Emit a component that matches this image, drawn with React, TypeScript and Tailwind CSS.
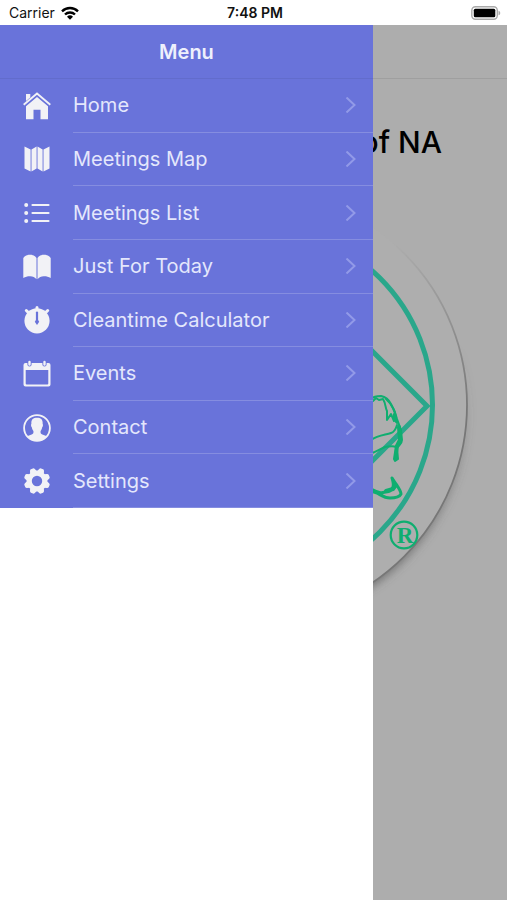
import type { ReactNode } from "react";

interface MenuItem {
    label: string;
    icon: ReactNode;
}

const HomeIcon = () => (
    <svg viewBox="0 0 28 28" className="size-7" fill="currentColor" aria-hidden="true">
        <path d="M14 5 25 14.3V27.3h-7.500v-9.500h-7v9.500H3V14.300z" />
        <path d="M.7 12.800 14 1.500l13.300 11.300" fill="none" stroke="currentColor" strokeWidth="1.900" />
        <path d="M3 2h4.300v3.500L3 9z" />
    </svg>
);

const MapIcon = () => (
    <svg viewBox="0 0 28 28" className="size-7" fill="currentColor" aria-hidden="true">
        <path d="M1.500 1.500 7.600 4.500V26.500L1.500 23.500zM8.500 4.500 13.600 1.500v22L8.500 26.500zM14.500 1.500l5.100 3v22l-5.100-3zM20.500 4.500 26.500 1.500v22L20.500 26.500z" />
    </svg>
);

const ListIcon = () => (
    <svg viewBox="0 0 28 28" className="size-7" fill="currentColor" aria-hidden="true">
        <circle cx="3.200" cy="6" r="2" />
        <circle cx="3.200" cy="14" r="2" />
        <circle cx="3.200" cy="22" r="2" />
        <path d="M9.500 6H25.500M9.500 14H25.500M9.500 22H25.500" stroke="currentColor" strokeWidth="2.200" strokeLinecap="round" />
    </svg>
);

const BookIcon = () => (
    <svg viewBox="0 0 28 28" className="size-7" fill="currentColor" aria-hidden="true">
        <path d="M13.500 5C12 2.600 9.800 1.800 7 1.800S1.800 2.600.3 5V25c2.400-1.500 4.600-1.900 7-1.800 2.500.1 4.600 1 6.200 3zM14.500 5C16 2.600 18.200 1.800 21 1.800s5.200.8 6.700 3.200V25c-2.400-1.500-4.600-1.900-7-1.800-2.500.1-4.600 1-6.200 3z" />
    </svg>
);

const StopwatchIcon = () => (
    <svg viewBox="0 0 28 28" className="size-7" aria-hidden="true">
        <circle cx="14" cy="14.800" r="12.600" fill="currentColor" />
        <path d="M14 1.500v3M3.300 4.500l1.500 1.500M24.700 4.500l-1.500 1.500" stroke="currentColor" strokeWidth="3" strokeLinecap="round" />
        <path d="M14 6.500v9" stroke="#6973da" strokeWidth="2.200" strokeLinecap="round" />
        <path d="M14 12.500l2.200 3.200L14 19l-2.200-3.300z" fill="#6973da" />
    </svg>
);

const CalendarIcon = () => (
    <svg viewBox="0 0 28 28" className="size-7" aria-hidden="true">
        <path fillRule="evenodd" fill="currentColor" d="M2.500 3h23a2 2 0 0 1 2 2v19.500a2 2 0 0 1-2 2h-23a2 2 0 0 1-2-2V5a2 2 0 0 1 2-2zM2.700 10v13.500q0 1 1 1h20.600q1 0 1-1V10z" />
        <path d="M6.500 1.500v3M21.500 1.500v3" stroke="#6973da" strokeWidth="4.200" strokeLinecap="round" />
        <path d="M6.500 2v2.500M21.500 2v2.500" stroke="currentColor" strokeWidth="2.400" strokeLinecap="round" />
    </svg>
);

const ContactIcon = () => (
    <svg viewBox="0 0 28 28" className="size-7" aria-hidden="true">
        <circle cx="14" cy="14" r="12.900" fill="none" stroke="currentColor" strokeWidth="1.800" />
        <path fill="currentColor" d="M14 3.800c4.300 0 6 2.300 5.600 6.200.7.300.3 2.900-.5 3.500-.3 1.700-.8 2.700-1.500 3.500-.2 2.400.1 3 1.700 3.600l4.700 1.700A13 13 0 0 1 4 22.300l4.700-1.700c1.600-.6 1.900-1.200 1.700-3.600-.7-.8-1.200-1.800-1.500-3.500-.8-.6-1.200-3.200-.5-3.500C8 6.100 9.700 3.800 14 3.800z" />
    </svg>
);

const GEAR_TEETH = [22.5, 67.5, 112.5, 157.5, 202.5, 247.5, 292.5, 337.5];

const SettingsIcon = () => (
    <svg viewBox="0 0 28 28" className="size-7" aria-hidden="true">
        <circle cx="14" cy="14" r="7.800" fill="none" stroke="currentColor" strokeWidth="5.200" />
        {GEAR_TEETH.map((angle) => (
            <path key={angle} d="M10.300 5 11.400 2q.5-1.200 1.500-1.200h2.200q1 0 1.500 1.200l1.100 3z" fill="currentColor" transform={`rotate(${angle} 14 14)`} />
        ))}
    </svg>
);

const menuItems: MenuItem[] = [
    { label: "Home", icon: <HomeIcon /> },
    { label: "Meetings Map", icon: <MapIcon /> },
    { label: "Meetings List", icon: <ListIcon /> },
    { label: "Just For Today", icon: <BookIcon /> },
    { label: "Cleantime Calculator", icon: <StopwatchIcon /> },
    { label: "Events", icon: <CalendarIcon /> },
    { label: "Contact", icon: <ContactIcon /> },
    { label: "Settings", icon: <SettingsIcon /> },
];

function StatusBar() {
    return (
        <div className="grid h-[25px] grid-cols-3 items-center bg-white pr-[6px] pl-[9px] text-sm text-[#111]">
            <div className="flex items-center gap-[6px]">
                <span>Carrier</span>
                <svg viewBox="0 0 18 14" className="h-[14px] w-[18px]" aria-hidden="true">
                    <path d="M1 5.300a11.500 11.500 0 0 1 16 0M4 8.500a7.200 7.200 0 0 1 10 0" fill="none" stroke="#000" strokeWidth="2.400" />
                    <path d="M9 13.700 6 10.700a4.300 4.300 0 0 1 6 0z" />
                </svg>
            </div>
            <span className="text-center font-semibold">7:48 PM</span>
            <svg viewBox="0 0 30 14" className="h-[14px] w-[30px] justify-self-end" aria-hidden="true">
                <rect x=".8" y=".8" width="25.500" height="12.400" rx="3.600" fill="#fff" stroke="#aaa" strokeWidth="1.400" />
                <rect x="2.800" y="2.700" width="21.500" height="8.600" rx="1.500" fill="#000" />
                <path d="M27.500 4.700c2.300.7 2.300 3.900 0 4.600z" fill="#aaa" />
            </svg>
        </div>
    );
}

function Emblem() {
    return (
        <svg viewBox="0 180 507 460" className="w-full" role="img" aria-label="NA emblem">
            <defs>
                <linearGradient id="rim" gradientUnits="userSpaceOnUse" x1="385" y1="245" x2="450" y2="420">
                    <stop offset="0" stopColor="#777" stopOpacity="0" />
                    <stop offset="1" stopColor="#777" />
                </linearGradient>
                <linearGradient id="shade" gradientUnits="userSpaceOnUse" x1="400" y1="340" x2="380" y2="590">
                    <stop offset="0" stopColor="#555" stopOpacity="0" />
                    <stop offset="1" stopColor="#555" stopOpacity=".65" />
                </linearGradient>
                <filter id="soft">
                    <feGaussianBlur stdDeviation="4" />
                </filter>
            </defs>
            <circle cx="255" cy="409" r="213" fill="url(#shade)" filter="url(#soft)" />
            <circle cx="253" cy="405" r="214" fill="#aeaeae" stroke="url(#rim)" strokeWidth="1.800" />
            <g fill="none" stroke="#2aa78b" strokeWidth="5">
                <circle cx="253" cy="405" r="179.500" />
                <path d="M253 231.500 427 406 253 580.500 79 406z" />
            </g>
            <g fill="none" stroke="#0fae70" strokeWidth="2" strokeLinecap="round" strokeLinejoin="round">
                <path d="M371 399c3-3 7-3 10-3 5 1 8 4 10 8 3 5 5 10 6 15l4 11 1 10c0 4-3 5-5 8l1 11-3 2 1-14c-4-2-8 0-11 0-5 2-9 5-13 6" />
                <path d="M373 401l3-3 3 2 4-1c3 5 2 8 4 12v9l4-6 3 7v-7l2 8M371 440c7-5 14-5 20-7 4-1 5-5 6-8M386 399c7 6 10 14 11 24" />
                <path d="M399 427l1 13-3 6-2 13" strokeWidth="4" />
                <path d="M371 489c4 2 6 3 10 4 5-2 10 0 12-6 1-3 0-6-1-9l4 6c2 3 5 7 5 10-2 4-7 4-11 4-6 0-9-3-13-5l-6-2" strokeWidth="3" />
                <path d="M386 491l7-2 3-4" strokeWidth="4" />
            </g>
            <circle cx="404" cy="535" r="13.300" fill="none" stroke="#0fae70" strokeWidth="2.200" />
            <text x="405" y="543" textAnchor="middle" fill="#0fae70" fontSize="23" fontWeight="700" fontFamily="Liberation Serif, serif">R</text>
        </svg>
    );
}

function Menu() {
    return (
        <aside className="absolute inset-y-0 left-0 w-[373px] max-w-full bg-white">
            <div className="bg-[#6973da] text-[#eef0fc]">
                <h2 className="flex h-[54px] items-center justify-center border-b border-[#626ccc] text-xl font-semibold">Menu</h2>
                <nav className="grid h-[429px] grid-rows-8">
                    {menuItems.map((item) => (
                        <a key={item.label} href="#" className="flex items-stretch pl-[23px] text-[#f2f2f6]">
                            <span className="flex w-[50px] items-center">{item.icon}</span>
                            <span className="flex flex-1 items-center justify-between border-b border-[#858de0] pr-[17px] text-xl text-[#e4e7fc]">
                                {item.label}
                                <svg viewBox="0 0 11 16" className="h-4 w-[11px]" aria-hidden="true">
                                    <path d="M1.500 .5 9.500 8 1.500 15.500" fill="none" stroke="#929ae8" strokeWidth="2" />
                                </svg>
                            </span>
                        </a>
                    ))}
                </nav>
            </div>
        </aside>
    );
}

export default function App() {
    return (
        <div className="flex min-h-screen flex-col bg-[#adadad] font-['Inter',sans-serif]">
            <StatusBar />
            <div className="relative flex-1 overflow-hidden">
                <header className="h-[54px] border-b border-[#9f9f9f]" />
                <main>
                    <h1 className="pt-[42px] pr-[65px] pb-[17px] text-right text-[30px] leading-[42px] font-medium text-black">of NA</h1>
                    <Emblem />
                </main>
                <Menu />
            </div>
        </div>
    );
}
